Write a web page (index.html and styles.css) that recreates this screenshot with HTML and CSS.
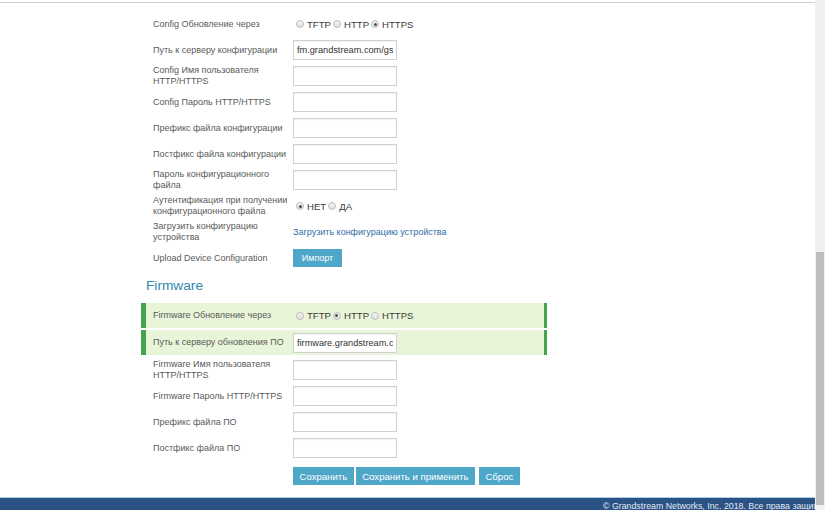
FILE: index.html
```html
<!DOCTYPE html>
<html lang="ru">
<head>
<meta charset="utf-8">
<title>Provisioning</title>
<link rel="stylesheet" href="styles.css">
</head>
<body>
<div class="screen">
  <div class="page">
    <div class="topline"></div>
    <div class="content">
      <div class="form">
        <div class="row">
          <div class="label">Config Обновление через</div>
          <div class="value radios">
            <span class="radio"></span><span class="opt">TFTP</span>
            <span class="radio"></span><span class="opt">HTTP</span>
            <span class="radio checked"></span><span class="opt">HTTPS</span>
          </div>
        </div>
        <div class="row">
          <div class="label">Путь к серверу конфигурации</div>
          <div class="value"><input class="field" type="text" value="fm.grandstream.com/gs"></div>
        </div>
        <div class="row">
          <div class="label">Config Имя пользователя<br>HTTP/HTTPS</div>
          <div class="value"><input class="field" type="text"></div>
        </div>
        <div class="row">
          <div class="label">Config Пароль HTTP/HTTPS</div>
          <div class="value"><input class="field" type="text"></div>
        </div>
        <div class="row">
          <div class="label">Префикс файла конфигурации</div>
          <div class="value"><input class="field" type="text"></div>
        </div>
        <div class="row">
          <div class="label">Постфикс файла конфигурации</div>
          <div class="value"><input class="field" type="text"></div>
        </div>
        <div class="row">
          <div class="label">Пароль конфигурационного<br>файла</div>
          <div class="value"><input class="field" type="text"></div>
        </div>
        <div class="row">
          <div class="label">Аутентификация при получении<br>конфигурационного файла</div>
          <div class="value radios">
            <span class="radio checked"></span><span class="opt">НЕТ</span>
            <span class="radio"></span><span class="opt">ДА</span>
          </div>
        </div>
        <div class="row">
          <div class="label">Загрузить конфигурацию<br>устройства</div>
          <div class="value"><a class="link" href="#">Загрузить конфигурацию устройства</a></div>
        </div>
        <div class="row">
          <div class="label">Upload Device Configuration</div>
          <div class="value"><button class="btn btn-import" type="button">Импорт</button></div>
        </div>

        <h2 class="section">Firmware</h2>

        <div class="row hl">
          <div class="label">Firmware Обновление через</div>
          <div class="value radios">
            <span class="radio"></span><span class="opt">TFTP</span>
            <span class="radio checked"></span><span class="opt">HTTP</span>
            <span class="radio"></span><span class="opt">HTTPS</span>
          </div>
        </div>
        <div class="row hl">
          <div class="label">Путь к серверу обновления ПО</div>
          <div class="value"><input class="field" type="text" value="firmware.grandstream.com"></div>
        </div>
        <div class="row">
          <div class="label">Firmware Имя пользователя<br>HTTP/HTTPS</div>
          <div class="value"><input class="field" type="text"></div>
        </div>
        <div class="row">
          <div class="label">Firmware Пароль HTTP/HTTPS</div>
          <div class="value"><input class="field" type="text"></div>
        </div>
        <div class="row">
          <div class="label">Префикс файла ПО</div>
          <div class="value"><input class="field" type="text"></div>
        </div>
        <div class="row">
          <div class="label">Постфикс файла ПО</div>
          <div class="value"><input class="field" type="text"></div>
        </div>

        <div class="actions">
          <button class="btn" type="button">Сохранить</button>
          <button class="btn" type="button">Сохранить и применить</button>
          <button class="btn btn-reset" type="button">Сброс</button>
        </div>
      </div>
    </div>
    <div class="footer">© Grandstream Networks, Inc. 2018. Все права защищены.</div>
  </div>
  <div class="scrollbar"><div class="track-top"></div><div class="thumb"></div></div>
</div>
</body>
</html>
```

FILE: styles.css
```css
* { box-sizing: border-box; }

html, body {
  margin: 0;
  padding: 0;
  height: 100%;
  overflow: hidden;
  background: #fff;
}

body {
  font-family: "Liberation Sans", Arial, sans-serif;
  color: #555;
}

.screen {
  display: flex;
  width: 825px;
  height: 510px;
}

.page {
  width: 815px;
  height: 510px;
  display: flex;
  flex-direction: column;
  overflow: hidden;
}

.topline {
  margin-top: 2px;
  height: 1px;
  background: #cfcfcf;
  flex: none;
}

.content {
  flex: 1;
  padding: 8px 0 0 141px;
}

.form {
  width: 406px;
}

.row {
  display: flex;
  align-items: center;
  height: 26px;
}

.label {
  width: 152px;
  padding-left: 12px;
  font-size: 9px;
  line-height: 11px;
  color: #5a5a5a;
  white-space: nowrap;
  flex: none;
}

.value {
  display: flex;
  align-items: center;
  font-size: 9.6px;
  color: #3a3a3a;
}

.radios .radio {
  width: 8px;
  height: 8px;
  border-radius: 50%;
  border: 1px solid #bdbdbd;
  background: linear-gradient(#f6f6f6, #dedede);
  margin: 0 3px 0 2px;
  position: relative;
  flex: none;
}

.radios .radio:first-child {
  margin-left: 3px;
}

.radios .radio.checked::after {
  content: "";
  position: absolute;
  left: 1.5px;
  top: 1.5px;
  width: 3px;
  height: 3px;
  border-radius: 50%;
  background: #505050;
}

.field {
  width: 104px;
  height: 20px;
  border: 1px solid #d0d0d0;
  border-radius: 0;
  padding: 0 3px;
  font-family: "Liberation Sans", Arial, sans-serif;
  font-size: 9.2px;
  color: #333;
  background: #fff;
  box-shadow: inset 0 1px 1px rgba(0, 0, 0, 0.06);
  outline: none;
}

.link {
  color: #2f6ea6;
  text-decoration: none;
  font-size: 9px;
}

.btn {
  height: 18px;
  border: none;
  border-radius: 0;
  background: #4ea6c9;
  color: #fff;
  font-family: "Liberation Sans", Arial, sans-serif;
  font-size: 9.6px;
  padding: 0 6.5px;
  cursor: pointer;
}

.btn-import {
  width: 49px;
  padding: 0;
  font-size: 9px;
}

.btn-reset {
  margin-left: 2px;
}

.section {
  margin: 0;
  font-weight: normal;
  font-size: 13.7px;
  line-height: 18px;
  color: #2f87af;
  padding: 6px 0 8px 5px;
}

.row.hl {
  height: 25px;
  margin-bottom: 2px;
  background: #e9f5d8;
  border-left: 5px solid #47a44e;
  border-right: 3px solid #47a44e;
}

.row.hl .label {
  width: 147px;
  padding-left: 7px;
}

.actions {
  display: flex;
  gap: 2px;
  padding-left: 152px;
  margin-top: 6px;
}

.footer {
  flex: none;
  height: 13px;
  border-top: 1px solid #a9cfe3;
  background: #2b5285;
  color: #e3e9f2;
  font-size: 8.8px;
  line-height: 12px;
  padding: 2px 0 0 603px;
  white-space: nowrap;
  overflow: hidden;
}

.scrollbar {
  width: 10px;
  height: 510px;
  background: #f0f0f0;
  display: flex;
  flex-direction: column;
  flex: none;
}

.track-top {
  height: 252px;
  flex: none;
}

.thumb {
  height: 253px;
  width: 8px;
  margin-left: 1px;
  background: #bdbdbd;
}
```
